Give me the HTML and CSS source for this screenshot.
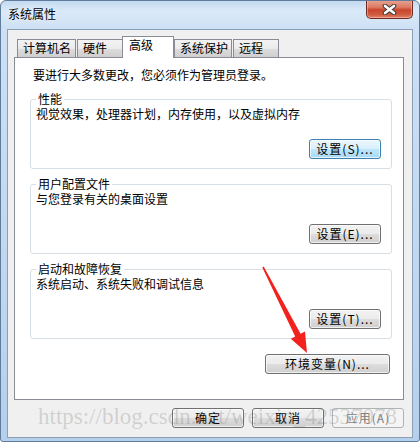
FILE: index.html
```html
<!DOCTYPE html>
<html lang="zh-CN">
<head>
  <meta charset="UTF-8">
  <meta name="viewport" content="width=device-width, initial-scale=1.0">
  <title>系统属性</title>
  <link rel="stylesheet" href="styles.css">
</head>
<body>

<div class="window">
  <div class="titlebar">
    <span class="title">系统属性</span>
    <div class="close">
      <svg width="15" height="11" viewBox="0 0 15 11">
        <path d="M3 2 L12 9 M12 2 L3 9" stroke="#3b3b3b" stroke-width="4.6" stroke-linecap="round"/>
        <path d="M3 2 L12 9 M12 2 L3 9" stroke="#ffffff" stroke-width="2.6" stroke-linecap="round"/>
      </svg>
    </div>
  </div>

  <div class="client">
    <!-- tabs -->
    <div class="tabs">
      <div class="tab tab-name">计算机名</div>
      <div class="tab tab-hw">硬件</div>
      <div class="tab tab-active">高级</div>
      <div class="tab tab-protect">系统保护</div>
      <div class="tab tab-remote">远程</div>
    </div>

    <div class="panel">
      <p class="intro">要进行大多数更改，您必须作为管理员登录。</p>

      <fieldset class="group">
        <legend>性能</legend>
        <p>视觉效果，处理器计划，内存使用，以及虚拟内存</p>
        <div class="group-actions">
          <button class="btn btn-default">设置(S)...</button>
        </div>
      </fieldset>

      <fieldset class="group">
        <legend>用户配置文件</legend>
        <p>与您登录有关的桌面设置</p>
        <div class="group-actions">
          <button class="btn">设置(E)...</button>
        </div>
      </fieldset>

      <fieldset class="group">
        <legend>启动和故障恢复</legend>
        <p>系统启动、系统失败和调试信息</p>
        <div class="group-actions">
          <button class="btn">设置(T)...</button>
        </div>
      </fieldset>

      <div class="panel-actions">
        <button class="btn btn-wide">环境变量(N)...</button>
      </div>
    </div>

    <div class="dialog-actions">
      <button class="btn">确定</button>
      <button class="btn">取消</button>
      <button class="btn" disabled>应用(A)</button>
    </div>
  </div>

  <!-- overlays from the screenshot -->
  <div class="watermark">https://blog.csdn.net/weixin_42537078</div>
  <svg class="arrow" width="420" height="442" viewBox="0 0 420 442">
    <polygon points="262.3,267.4 263.7,266.6 300.6,333.8 305.0,331.6 307,353 290.8,338.8 295.2,336.6" fill="#f2231f"/>
  </svg>
</div>

</body>
</html>
```
FILE: styles.css
```css
body {
  margin: 0;
  padding: 0;
  font-family: "Noto Sans CJK SC", "Liberation Sans", sans-serif;
  font-size: 12px;
  color: #000;
  background: #fff;
}

p {
  margin: 0;
}

.window {
  position: relative;
  width: 420px;
  height: 442px;
  box-sizing: border-box;
  border: 1px solid #5f7c9c;
  border-radius: 6px 6px 3px 3px;
  background: linear-gradient(180deg, #c4daf1 0%, #dae9f8 10px, #cde0f4 28px, #c0d7ef 60%, #b6cfea 100%);
  overflow: hidden;
}

/* title bar */
.titlebar {
  height: 28px;
  display: flex;
  justify-content: space-between;
  align-items: flex-start;
  padding-left: 7px;
}

.title {
  margin-top: 6px;
  line-height: 14px;
  text-shadow: 0 0 6px rgba(255, 255, 255, 0.9);
}

.close {
  width: 47px;
  height: 19px;
  margin-top: -1px;
  margin-right: 6px;
  box-sizing: border-box;
  border: 1px solid #6a2b22;
  border-top: none;
  border-radius: 0 0 5px 5px;
  background: linear-gradient(180deg, #e9a593 0%, #dc7b63 40%, #c9452c 55%, #cf5a3d 80%, #e0836a 100%);
  box-shadow: inset 0 0 0 1px rgba(255, 200, 190, 0.5);
  display: flex;
  justify-content: center;
  align-items: center;
}

/* client area */
.client {
  height: 409px;
  margin: 0 6px;
  box-sizing: border-box;
  border: 1px solid #8ba0b8;
  background: #f0f0f0;
  padding: 6px 8px 0 6px;
}

.tabs {
  height: 21px;
  display: flex;
  align-items: flex-end;
  padding-left: 3px;
}

.tab {
  height: 18px;
  box-sizing: border-box;
  border: 1px solid #898c95;
  border-bottom: none;
  padding-left: 5px;
  line-height: 16px;
  background: linear-gradient(180deg, #f3f3f3 0%, #ebebeb 50%, #dddddd 51%, #cfcfcf 100%);
  margin-right: 1px;
}

.tab-name { width: 59px; }
.tab-hw { width: 46px; margin-right: 0; }
.tab-protect { width: 58px; }
.tab-remote { width: 46px; }

.tab-active {
  position: relative;
  z-index: 1;
  width: 52px;
  height: 22px;
  margin: 0 0 -1px -1px;
  padding-left: 6px;
  padding-top: 1px;
  line-height: 14px;
  background: #fff;
}

.panel {
  height: 343px;
  box-sizing: border-box;
  border: 1px solid #898c95;
  background: #fff;
  padding: 10px 11px 0 15px;
  display: flex;
  flex-direction: column;
}

.intro {
  margin: 0 0 10px 3px;
  line-height: 14px;
}

.group {
  margin: 0 0 8px;
  padding: 0 10px 9px 5px;
  border: 1px solid #d5dfe5;
  border-radius: 3px;
  min-width: 0;
}

.group legend {
  padding: 0 2px;
  line-height: 14px;
}

.group p {
  line-height: 14px;
  padding-top: 1px;
}

.group-actions {
  display: flex;
  justify-content: flex-end;
  margin-top: 18px;
}

.panel-actions {
  display: flex;
  justify-content: flex-end;
  margin-top: 7px;
  padding-right: 2px;
}

.dialog-actions {
  display: flex;
  justify-content: flex-end;
  gap: 8px;
  margin-top: 8px;
}

/* buttons */
.btn {
  width: 72px;
  height: 20px;
  padding: 0;
  box-sizing: border-box;
  border: 1px solid #707070;
  border-radius: 3px;
  font-family: "Noto Sans CJK SC", "Liberation Sans", sans-serif;
  font-size: 12px;
  line-height: 16px;
  letter-spacing: 1px;
  color: #000;
  background: linear-gradient(180deg, #f2f2f2 0%, #ebebeb 50%, #dddddd 51%, #cfcfcf 100%);
  box-shadow: inset 0 0 0 1px rgba(255, 255, 255, 0.7);
}

.btn-default {
  border-color: #3c7fb1;
  background: linear-gradient(180deg, #eaf6fd 0%, #d9f0fc 50%, #bee6fd 51%, #a7d9f5 100%);
}

.btn-wide {
  width: 125px;
}

.btn:disabled {
  border-color: #adb2b5;
  background: #f4f4f4;
  color: #838383;
  box-shadow: none;
}

/* overlays */
.watermark {
  position: absolute;
  left: 37px;
  top: 404px;
  font-family: "Liberation Serif", serif;
  font-size: 23px;
  line-height: 24px;
  color: rgba(110, 110, 110, 0.25);
  white-space: nowrap;
  pointer-events: none;
}

.arrow {
  position: absolute;
  left: -1px;
  top: -1px;
  pointer-events: none;
}
```
